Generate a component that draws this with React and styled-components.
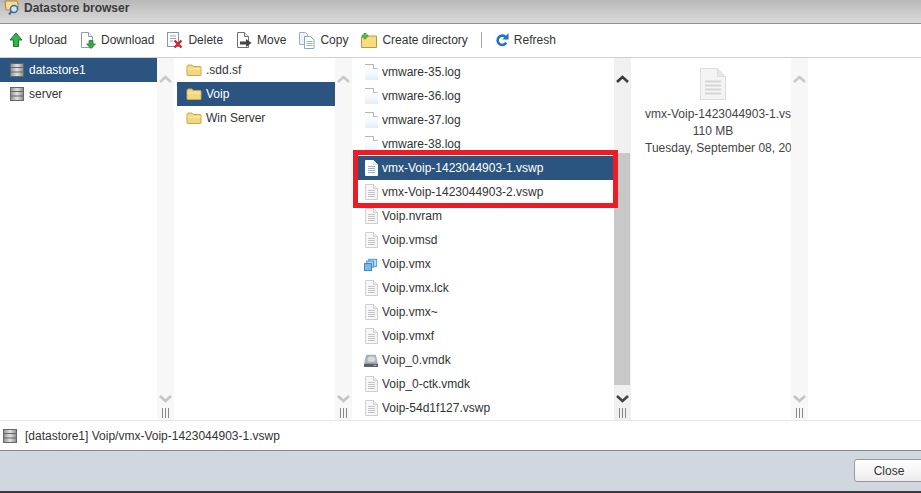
import React from 'react';
import styled, { createGlobalStyle } from 'styled-components';

const GlobalStyle = createGlobalStyle`
  html, body {
    margin: 0;
    padding: 0;
    background: #fff;
    overflow: hidden;
  }
  body {
    font-family: "Liberation Sans", Arial, sans-serif;
    font-size: 12px;
    color: #333;
  }
`;

const Page = styled.div`
  width: 921px;
  height: 493px;
  display: flex;
  flex-direction: column;
  overflow: hidden;
`;

const TitleBar = styled.header`
  height: 24px;
  flex: none;
  display: flex;
  align-items: center;
  gap: 4px;
  padding: 0 0 8px 4px;
  box-sizing: border-box;
  background: linear-gradient(#b9b9b9, #d9d9d9);
  border-bottom: 1px solid #8f8f8f;
  font-weight: bold;
  color: #3b3b3b;
`;

const Toolbar = styled.div`
  height: 34px;
  flex: none;
  box-sizing: border-box;
  display: flex;
  align-items: center;
  padding: 0 0 1px 8px;
  border-bottom: 1px solid #cfcfcf;
`;

const ToolButton = styled.div`
  display: flex;
  align-items: center;
  gap: 5px;
  margin-right: 13px;
  color: #333;
  white-space: nowrap;
`;

const ToolDivider = styled.div`
  width: 1px;
  height: 16px;
  background: #a8a8a8;
  margin: 0 13px 0 0;
`;

const Panes = styled.main`
  height: 362px;
  flex: none;
  display: flex;
  overflow: hidden;
`;

const Column = styled.section`
  position: relative;
  width: ${({ $width }) => $width}px;
  flex: none;
  display: flex;
`;

const List = styled.ul`
  list-style: none;
  margin: 0;
  padding: ${({ $top }) => $top}px 0 0 ${({ $left }) => $left}px;
  flex: 1;
  min-width: 0;
`;

const Row = styled.li`
  height: 24px;
  display: flex;
  align-items: center;
  gap: 4px;
  padding-left: 9px;
  white-space: nowrap;
  background: ${({ $selected }) => ($selected ? '#2b5580' : 'transparent')};
  color: ${({ $selected }) => ($selected ? '#fff' : '#333')};
`;

const IconSlot = styled.span`
  width: ${({ $narrow }) => ($narrow ? 14 : 16)}px;
  flex: none;
  display: flex;
  justify-content: center;
`;

const Bar = styled.div`
  width: 17px;
  flex: none;
  display: flex;
  flex-direction: column;
  align-items: center;
  padding: 17px 0 2px;
  box-sizing: border-box;
  background: ${({ $active }) => ($active ? '#f0f0f0' : '#f7f7f7')};
`;

const Track = styled.div`
  flex: 1;
  width: 100%;
  padding-top: ${({ $offset }) => $offset || 0}px;
`;

const Thumb = styled.div`
  height: ${({ $height }) => $height}px;
  width: 16px;
  background: #c8c8c8;
`;

const Grip = styled.div`
  width: 7px;
  height: 10px;
  margin-top: 5px;
  background: repeating-linear-gradient(90deg, #888 0 1px, transparent 1px 3px);
`;

const RedBox = styled.div`
  position: absolute;
  left: 1px;
  top: 92px;
  width: 265px;
  height: 58px;
  box-sizing: border-box;
  border: 5px solid #ed1c24;
  pointer-events: none;
`;

const Preview = styled.div`
  flex: 1;
  min-width: 0;
  overflow: hidden;
  padding: 10px 0 0 14px;
`;

const PreviewBody = styled.div`
  width: 136px;
  display: flex;
  flex-direction: column;
  align-items: center;
  color: #444;
`;

const PreviewLine = styled.div`
  width: 100%;
  height: 17px;
  line-height: 17px;
  text-align: center;
  white-space: nowrap;
`;

const PreviewIcon = styled.div`
  height: 38px;
`;

const StatusBar = styled.div`
  height: 30px;
  flex: none;
  box-sizing: border-box;
  display: flex;
  align-items: center;
  gap: 8px;
  padding-left: 3px;
  border-top: 1px solid #e6e6e6;
  color: #333;
`;

const Footer = styled.footer`
  flex: 1;
  display: flex;
  justify-content: flex-end;
  align-items: flex-start;
  padding: 8px 0 0;
  background: #d0d7df;
  border-top: 1px solid #8a8a8a;
  border-bottom: 2px solid #3a3a3a;
  overflow: hidden;
`;

const CloseButton = styled.button`
  width: 70px;
  height: 23px;
  flex: none;
  margin-right: -3px;
  padding: 0;
  font: inherit;
  color: #333;
  border: 1px solid #9a9a9a;
  border-radius: 3px;
  background: linear-gradient(#ffffff, #ececec);
`;

const Server = () => (
  <svg width="14" height="14" viewBox="0 0 14 14">
    <defs>
      <linearGradient id="disk" x1="0" x2="1" y1="0" y2="0">
        <stop offset="0" stopColor="#8f8f8f" />
        <stop offset="0.5" stopColor="#e2e2e2" />
        <stop offset="1" stopColor="#8a8a8a" />
      </linearGradient>
    </defs>
    <rect x="0.5" y="0.5" width="13" height="13" fill="url(#disk)" stroke="#666" />
    <path d="M1 4.5h12M1 9h12" stroke="#666" />
  </svg>
);

const Folder = () => (
  <svg width="16" height="14" viewBox="0 0 16 14">
    <path d="M1 3l1-1h4l1 1.500h7.500l.5 1V12l-.5.5h-13L1 12z" fill="#f3d67e" stroke="#c9a94c" />
    <path d="M1.500 6h13" stroke="#fbeeb8" />
  </svg>
);

const Doc = ({ light }) => (
  <svg width="13" height="16" viewBox="0 0 13 16">
    <path d="M.5.500h8l4 4v11H.5z" fill={light ? '#fff' : '#f7f7f7'} stroke={light ? '#fff' : '#cfcfcf'} />
    <path d="M8.500.500v4h4" fill={light ? '#dfe6ee' : '#eee'} stroke={light ? '#dfe6ee' : '#cfcfcf'} />
    <path d="M3 6.500h7M3 8.500h7M3 10.500h7M3 12.500h7" stroke={light ? '#9fb1c4' : '#c4c4c4'} />
  </svg>
);

const LogFile = () => (
  <svg width="13" height="16" viewBox="0 0 13 16">
    <defs>
      <linearGradient id="logfill" x1="0" x2="0" y1="0" y2="1">
        <stop offset="0.3" stopColor="#fff" />
        <stop offset="1" stopColor="#e3edf7" />
      </linearGradient>
    </defs>
    <path d="M0 1h8l5 4.500V16H0z" fill="url(#logfill)" />
    <path d="M0 .500h8.500v4h4" fill="none" stroke="#b4b4b4" />
  </svg>
);

const VmxFile = () => (
  <svg width="16" height="15" viewBox="0 0 16 15">
    <rect x="5.500" y="1.500" width="9" height="8" fill="#bcdcf5" stroke="#3c8ecb" />
    <rect x="3" y="3.500" width="8" height="7" fill="#a9d1f0" stroke="#3c8ecb" />
    <rect x=".5" y="6.500" width="8" height="8" fill="#7db9e8" stroke="#2f7fbe" />
  </svg>
);

const DiskFile = () => (
  <svg width="16" height="15" viewBox="0 0 16 15">
    <path d="M2.500 1h11L16 11H0z" fill="#a9b3bd" />
    <ellipse cx="8.500" cy="6" rx="4.500" ry="3" fill="#d6dbe0" />
    <rect y="11" width="16" height="4" rx="1" fill="#5c6167" />
    <path d="M11 13h3" stroke="#b8dca8" />
  </svg>
);

const UploadIcon = () => (
  <svg width="16" height="16" viewBox="0 0 16 16">
    <path d="M8 1l6 7h-3.500v6.500h-5V8H2z" fill="#36b44a" stroke="#14782c" />
  </svg>
);

const DownloadIcon = () => (
  <svg width="16" height="17" viewBox="0 0 16 17">
    <path d="M1.500.500h7l4 4v11h-11z" fill="#fff" stroke="#8e9fb3" />
    <path d="M8.500.500v4h4" fill="#e6edf4" stroke="#8e9fb3" />
    <path d="M9 8.500h4V12h2.500L11 16.500 6.500 12H9z" fill="#3aa84a" stroke="#1b7a30" strokeWidth=".7" />
  </svg>
);

const DeleteIcon = () => (
  <svg width="16" height="17" viewBox="0 0 16 17">
    <rect x=".5" y=".5" width="11" height="14" fill="#fff" stroke="#7f9ab5" />
    <path d="M3 4h6M3 6.500h6M3 9h3" stroke="#8ea6bd" />
    <path d="M7.500 8.500l7 7M14.500 8.500l-7 7" stroke="#d1232a" strokeWidth="2.400" />
  </svg>
);

const MoveIcon = () => (
  <svg width="16" height="17" viewBox="0 0 16 17">
    <path d="M1.500.500h7l4 4v11h-11z" fill="#fff" stroke="#6f6f6f" />
    <path d="M8.500.500v4h4" fill="#eee" stroke="#6f6f6f" />
    <path d="M4 9.500h6V7l5.500 4-5.500 4v-2.500H4z" fill="#444" />
  </svg>
);

const CopyIcon = () => (
  <svg width="16" height="17" viewBox="0 0 16 17">
    <path d="M.5.500h6l2 2v10h-8z" fill="#eef3f8" stroke="#9bb0c6" />
    <path d="M5.500 4.500h6l3.500 3.500v8.500H5.500z" fill="#fff" stroke="#8ea6bd" />
    <path d="M7.500 9.500h6M7.500 11.500h6M7.500 13.500h6" stroke="#9db2c8" />
  </svg>
);

const CreateDirIcon = () => (
  <svg width="16" height="15" viewBox="0 0 16 15">
    <path d="M.5 4h5l1-1h9v11.500H.5z" fill="#f7dc82" stroke="#b89a3e" />
    <path d="M3 0h2v2h2v2H5v2H3V4H1V2h2z" fill="#5fbf4a" stroke="#2f8a2a" strokeWidth=".5" />
  </svg>
);

const RefreshIcon = () => (
  <svg width="14" height="16" viewBox="0 0 15 16">
    <path d="M11.500 5A5 5 0 1 0 12 11" fill="none" stroke="#1d74c4" strokeWidth="2.800" />
    <path d="M14.500 0.500v7H8z" fill="#1d74c4" />
  </svg>
);

const Chevron = ({ down, color }) => (
  <svg width="13" height="8" viewBox="0 0 13 8">
    <path d={down ? 'M1 1l5.500 5L12 1' : 'M1 7l5.500-5L12 7'} fill="none" stroke={color} strokeWidth="2.600" />
  </svg>
);

const ScrollBar = ({ active, offset, thumb }) => (
  <Bar $active={active}>
    <Chevron color={active ? '#3a3a3a' : '#c9c9c9'} />
    <Track $offset={offset}>{thumb ? <Thumb $height={thumb} /> : null}</Track>
    <Chevron down color={active ? '#444' : '#c4c4c4'} />
    <Grip />
  </Bar>
);

const tools = [
  { label: 'Upload', Icon: UploadIcon },
  { label: 'Download', Icon: DownloadIcon },
  { label: 'Delete', Icon: DeleteIcon },
  { label: 'Move', Icon: MoveIcon },
  { label: 'Copy', Icon: CopyIcon },
  { label: 'Create directory', Icon: CreateDirIcon },
];

const files = [
  { name: 'vmware-35.log', Icon: LogFile },
  { name: 'vmware-36.log', Icon: LogFile },
  { name: 'vmware-37.log', Icon: LogFile },
  { name: 'vmware-38.log', Icon: LogFile },
  { name: 'vmx-Voip-1423044903-1.vswp', Icon: Doc, selected: true },
  { name: 'vmx-Voip-1423044903-2.vswp', Icon: Doc },
  { name: 'Voip.nvram', Icon: Doc },
  { name: 'Voip.vmsd', Icon: Doc },
  { name: 'Voip.vmx', Icon: VmxFile },
  { name: 'Voip.vmx.lck', Icon: Doc },
  { name: 'Voip.vmx~', Icon: Doc },
  { name: 'Voip.vmxf', Icon: Doc },
  { name: 'Voip_0.vmdk', Icon: DiskFile },
  { name: 'Voip_0-ctk.vmdk', Icon: Doc },
  { name: 'Voip-54d1f127.vswp', Icon: Doc },
];

const App = () => (
  <Page>
    <GlobalStyle />
    <TitleBar>
      <svg width="16" height="16" viewBox="0 0 16 16">
        <path d="M1 1h12l1 3v6H2z" fill="#f3dc9a" stroke="#a8863a" />
        <circle cx="10" cy="9" r="3.500" fill="#cfe3f3" stroke="#3d6d96" strokeWidth="1.400" />
        <path d="M7.500 11.500L5 14.500" stroke="#3d6d96" strokeWidth="2" />
      </svg>
      Datastore browser
    </TitleBar>
    <Toolbar>
      {tools.map(({ label, Icon }) => (
        <ToolButton key={label}>
          <Icon />
          {label}
        </ToolButton>
      ))}
      <ToolDivider />
      <ToolButton>
        <RefreshIcon />
        Refresh
      </ToolButton>
    </Toolbar>
    <Panes>
      <Column $width={174}>
        <List $top={0} $left={0}>
          <Row $selected><IconSlot><Server /></IconSlot>datastore1</Row>
          <Row><IconSlot><Server /></IconSlot>server</Row>
        </List>
        <ScrollBar />
      </Column>
      <Column $width={178}>
        <List $top={0} $left={3}>
          <Row><IconSlot><Folder /></IconSlot>.sdd.sf</Row>
          <Row $selected><IconSlot><Folder /></IconSlot>Voip</Row>
          <Row><IconSlot><Folder /></IconSlot>Win Server</Row>
        </List>
        <ScrollBar />
      </Column>
      <Column $width={279}>
        <List $top={2} $left={3}>
          {files.map(({ name, Icon, selected }) => (
            <Row key={name} $selected={selected}>
              <IconSlot $narrow><Icon light={selected} /></IconSlot>
              {name}
            </Row>
          ))}
        </List>
        <ScrollBar active offset={70} thumb={232} />
        <RedBox />
      </Column>
      <Column $width={177}>
        <Preview>
          <PreviewBody>
            <PreviewIcon>
              <svg width="26" height="32" viewBox="0 0 26 32">
                <path d="M.5.500h17l8 8v23H.5z" fill="#f4f4f4" stroke="#dcdcdc" />
                <path d="M17.500.500v8h8" fill="#e8e8e8" stroke="#dcdcdc" />
                <path d="M5 13.500h16M5 17.500h16M5 21.500h16M5 25.500h16" stroke="#d6d6d6" strokeWidth="2" />
              </svg>
            </PreviewIcon>
            <PreviewLine>vmx-Voip-1423044903-1.vswp</PreviewLine>
            <PreviewLine>110 MB</PreviewLine>
            <PreviewLine>Tuesday, September 08, 2015</PreviewLine>
          </PreviewBody>
        </Preview>
        <ScrollBar />
      </Column>
    </Panes>
    <StatusBar>
      <Server />
      [datastore1] Voip/vmx-Voip-1423044903-1.vswp
    </StatusBar>
    <Footer>
      <CloseButton>Close</CloseButton>
    </Footer>
  </Page>
);

export default App;
